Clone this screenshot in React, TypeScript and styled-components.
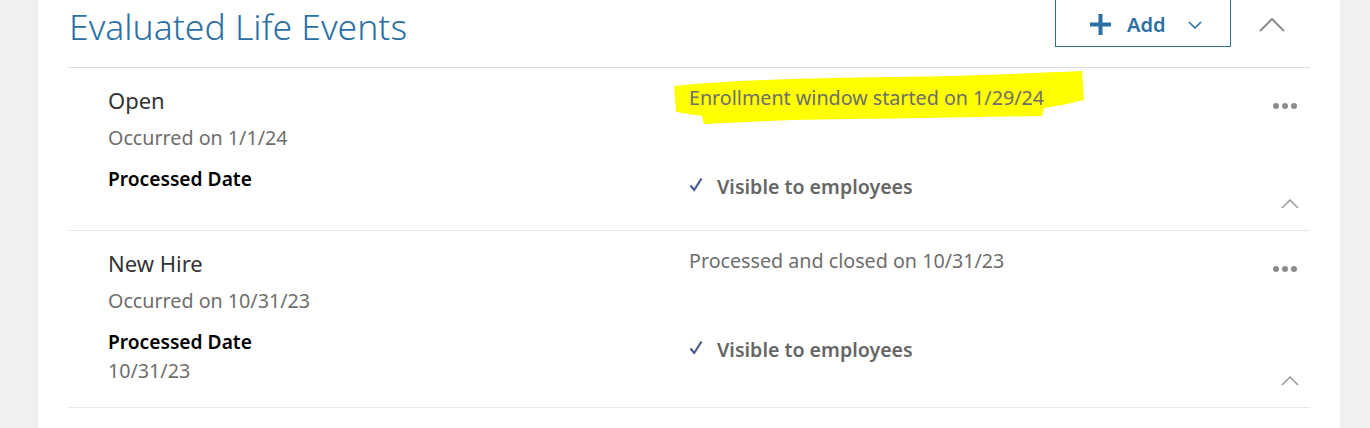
import React from "react";
import styled, { createGlobalStyle } from "styled-components";

const colors = {
  page: "#f0f0f0",
  white: "#ffffff",
  blue: "#2b70a5",
  border: "#dcdde0",
  rowBorder: "#e8e8e8",
  text: "#333333",
  gray: "#6e6e6e",
  darkGray: "#666666",
  icon: "#8c8c8c",
  check: "#4b5b8c",
  highlight: "#ffff00",
};

const GlobalStyle = createGlobalStyle`
  body {
    margin: 0;
    background: ${colors.page};
    font-family: "Noto Sans", "Open Sans", "Liberation Sans", sans-serif;
  }
`;

interface LifeEvent {
  name: string;
  occurred: string;
  status: string;
  processed: string;
  highlighted?: boolean;
}

const events: LifeEvent[] = [
  {
    name: "Open",
    occurred: "Occurred on 1/1/24",
    status: "Enrollment window started on 1/29/24",
    processed: "",
    highlighted: true,
  },
  {
    name: "New Hire",
    occurred: "Occurred on 10/31/23",
    status: "Processed and closed on 10/31/23",
    processed: "10/31/23",
  },
];

const CaretUp = ({ width, height, color, stroke }: { width: number; height: number; color: string; stroke: number }) => (
  <svg width={width} height={height} viewBox={`0 0 ${width} ${height}`}>
    <polyline
      points={`1,${height - 1} ${width / 2},1 ${width - 1},${height - 1}`}
      fill="none"
      stroke={color}
      strokeWidth={stroke}
    />
  </svg>
);

const Highlight = () => (
  <HighlightSvg width="414" height="56" viewBox="0 0 414 56">
    <path
      d="M2 16 C60 10, 140 8, 220 7 C300 6, 360 3, 410 1 L412 30 C400 33, 385 36, 372 38 L370 46 C300 47, 200 49, 120 50 L32 54 L30 46 L4 42 Z"
      fill={colors.highlight}
    />
  </HighlightSvg>
);

const EventRow = ({ event }: { event: LifeEvent }) => (
  <Row>
    <InfoColumn>
      <EventName>{event.name}</EventName>
      <Occurred>{event.occurred}</Occurred>
      <DateLabel>Processed Date</DateLabel>
      <DateValue>{event.processed}</DateValue>
    </InfoColumn>
    <StatusColumn>
      <StatusText>
        {event.highlighted && <Highlight />}
        <span>{event.status}</span>
      </StatusText>
      <Visible>
        <svg width="14" height="15" viewBox="0 0 14 15">
          <polyline points="1.5,8.5 5.2,13 12.5,1.5" fill="none" stroke={colors.check} strokeWidth="2.2" />
        </svg>
        Visible to employees
      </Visible>
    </StatusColumn>
    <Actions>
      <Dots>
        <Dot />
        <Dot />
        <Dot />
      </Dots>
      <CaretUp width={18} height={10} color="#9a9a9a" stroke={1.5} />
    </Actions>
  </Row>
);

export default function App() {
  return (
    <>
      <GlobalStyle />
      <Panel>
        <Header>
          <Title>Evaluated Life Events</Title>
          <HeaderActions>
            <AddButton>
              <svg width="21" height="21" viewBox="0 0 21 21">
                <rect x="8.5" y="0" width="4" height="21" fill={colors.blue} />
                <rect x="0" y="8.5" width="21" height="4" fill={colors.blue} />
              </svg>
              <AddLabel>Add</AddLabel>
              <svg width="14" height="8" viewBox="0 0 14 8">
                <polyline points="1,1 7,7 13,1" fill="none" stroke={colors.blue} strokeWidth="1.6" />
              </svg>
            </AddButton>
            <Collapse>
              <CaretUp width={26} height={14} color="#8c8c8c" stroke={2} />
            </Collapse>
          </HeaderActions>
        </Header>
        {events.map((e) => (
          <EventRow key={e.name} event={e} />
        ))}
      </Panel>
    </>
  );
}

const Panel = styled.div`
  margin: 0 30px 0 38px;
  padding: 0 30px 21px;
  background: ${colors.white};
  min-height: 428px;
  box-sizing: border-box;
`;

const Header = styled.div`
  display: flex;
  align-items: flex-start;
  justify-content: space-between;
  height: 67px;
  border-bottom: 1px solid ${colors.border};
`;

const Title = styled.h1`
  margin: 3px 0 0 1px;
  font-size: 35.5px;
  line-height: 46px;
  font-weight: 300;
  color: ${colors.blue};
`;

const HeaderActions = styled.div`
  display: flex;
  align-items: flex-start;
`;

const AddButton = styled.div`
  display: flex;
  align-items: center;
  box-sizing: border-box;
  width: 176px;
  height: 48px;
  margin-top: -1px;
  padding: 3px 0 0 34px;
  border: 1px solid ${colors.blue};
  color: ${colors.blue};
`;

const AddLabel = styled.span`
  margin: 0 23px 0 16px;
  font-size: 20px;
  font-weight: 600;
  line-height: 28px;
`;

const Collapse = styled.div`
  margin: 15px 25px 0 28px;
`;

const Row = styled.div`
  display: grid;
  grid-template-columns: 581px 1fr 60px;
  padding: 0 0 22px 40px;
  border-bottom: 1px solid ${colors.rowBorder};
`;

const InfoColumn = styled.div`
  display: flex;
  flex-direction: column;
  padding-top: 18px;
`;

const EventName = styled.div`
  font-size: 22px;
  line-height: 30px;
  color: ${colors.text};
  margin-top: -1px;
  margin-bottom: 1px;
`;

const Occurred = styled.div`
  margin-top: 8px;
  font-size: 19.7px;
  line-height: 28px;
  color: ${colors.gray};
`;

const DateLabel = styled.div`
  margin-top: 14px;
  font-size: 19.2px;
  line-height: 26px;
  font-weight: 600;
  color: #000;
`;

const DateValue = styled.div`
  margin-top: 2px;
  min-height: 14px;
  font-size: 19.7px;
  line-height: 28px;
  color: ${colors.gray};
`;

const StatusColumn = styled.div`
  display: flex;
  flex-direction: column;
  padding-top: 17px;
`;

const StatusText = styled.div`
  position: relative;
  font-size: 19.7px;
  line-height: 26px;
  color: ${colors.gray};

  & > span {
    position: relative;
  }
`;

const HighlightSvg = styled.svg`
  position: absolute;
  left: -17px;
  top: -15px;
`;

const Visible = styled.div`
  display: flex;
  align-items: center;
  gap: 14px;
  margin-top: 63px;
  font-size: 19.6px;
  line-height: 26px;
  font-weight: 600;
  color: ${colors.darkGray};

  svg {
    margin-top: -5px;
  }
`;

const Actions = styled.div`
  display: flex;
  flex-direction: column;
  align-items: flex-end;
  justify-content: space-between;
  padding: 35px 11px 0 0;
  margin-bottom: -1px;
`;

const Dots = styled.div`
  display: flex;
  gap: 3px;
  margin-right: 2px;
`;

const Dot = styled.span`
  width: 6px;
  height: 6px;
  border-radius: 50%;
  background: ${colors.icon};
`;
